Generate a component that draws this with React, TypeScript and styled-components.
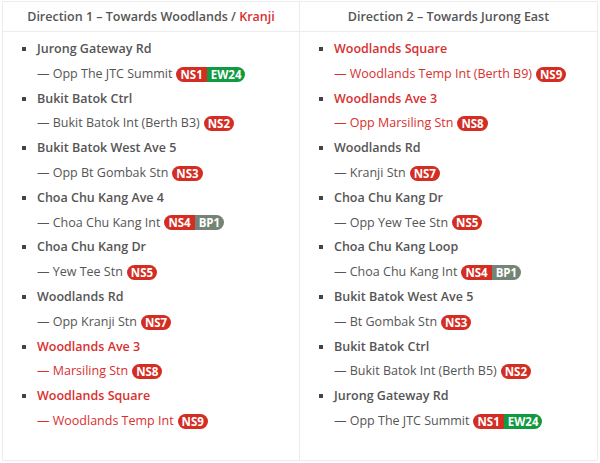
import React from 'react'
import styled, { createGlobalStyle } from 'styled-components'

const GlobalStyle = createGlobalStyle`
  body {
    margin: 0;
    background: #fff;
    font-family: 'Open Sans', 'Noto Sans', sans-serif;
    color: #555;
  }
`

const Table = styled.div`
  display: grid;
  grid-template-columns: 297px 297px;
  margin: 1px 0 0 2px;
  width: 596px;
  border: 1px solid #ececec;
  box-sizing: border-box;
`

const HeadCell = styled.div<{ $last?: boolean }>`
  height: 30px;
  display: flex;
  align-items: center;
  justify-content: center;
  padding-bottom: 1px;
  box-sizing: border-box;
  font-size: 12.5px;
  font-weight: 600;
  color: #555;
  border-bottom: 1px solid #ececec;
  border-right: ${({ $last }) => ($last ? 'none' : '1px solid #ececec')};
`

const Red = styled.span`
  color: #d8302f;
`

const BodyCell = styled.div<{ $last?: boolean }>`
  padding: 5px 0 26px 0;
  border-right: ${({ $last }) => ($last ? 'none' : '1px solid #ececec')};
`

const List = styled.ul`
  margin: 0;
  padding-left: 34px;
  list-style: square;
  font-size: 12.5px;
  line-height: 24.8px;

  li::marker {
    color: #444;
  }
`

const Stop = styled.li<{ $red?: boolean }>`
  color: ${({ $red }) => ($red ? '#d8302f' : '#555')};
`

const Road = styled.div`
  font-weight: 600;
`

const Sub = styled.div`
  display: flex;
  align-items: center;
  gap: 4px;
  white-space: nowrap;
`

const Pill = styled.span`
  display: inline-flex;
  height: 15px;
  border-radius: 8px;
  overflow: hidden;
  font-size: 11.5px;
  font-weight: 700;
  line-height: 15px;
  color: #fff;
`

const Code = styled.span<{ $line: string }>`
  padding: 0 4px;
  background: ${({ $line }) => ($line === 'EW' ? '#119a3f' : $line === 'BP' ? '#748477' : '#d42e24')};
`

type Stn = { road: string; stop: string; codes: string[]; red?: boolean }

const dir1: Stn[] = [
  { road: 'Jurong Gateway Rd', stop: 'Opp The JTC Summit', codes: ['NS1', 'EW24'] },
  { road: 'Bukit Batok Ctrl', stop: 'Bukit Batok Int (Berth B3)', codes: ['NS2'] },
  { road: 'Bukit Batok West Ave 5', stop: 'Opp Bt Gombak Stn', codes: ['NS3'] },
  { road: 'Choa Chu Kang Ave 4', stop: 'Choa Chu Kang Int', codes: ['NS4', 'BP1'] },
  { road: 'Choa Chu Kang Dr', stop: 'Yew Tee Stn', codes: ['NS5'] },
  { road: 'Woodlands Rd', stop: 'Opp Kranji Stn', codes: ['NS7'] },
  { road: 'Woodlands Ave 3', stop: 'Marsiling Stn', codes: ['NS8'], red: true },
  { road: 'Woodlands Square', stop: 'Woodlands Temp Int', codes: ['NS9'], red: true },
]

const dir2: Stn[] = [
  { road: 'Woodlands Square', stop: 'Woodlands Temp Int (Berth B9)', codes: ['NS9'], red: true },
  { road: 'Woodlands Ave 3', stop: 'Opp Marsiling Stn', codes: ['NS8'], red: true },
  { road: 'Woodlands Rd', stop: 'Kranji Stn', codes: ['NS7'] },
  { road: 'Choa Chu Kang Dr', stop: 'Opp Yew Tee Stn', codes: ['NS5'] },
  { road: 'Choa Chu Kang Loop', stop: 'Choa Chu Kang Int', codes: ['NS4', 'BP1'] },
  { road: 'Bukit Batok West Ave 5', stop: 'Bt Gombak Stn', codes: ['NS3'] },
  { road: 'Bukit Batok Ctrl', stop: 'Bukit Batok Int (Berth B5)', codes: ['NS2'] },
  { road: 'Jurong Gateway Rd', stop: 'Opp The JTC Summit', codes: ['NS1', 'EW24'] },
]

const StopList = ({ items }: { items: Stn[] }) => (
  <List>
    {items.map((s) => (
      <Stop key={s.road} $red={s.red}>
        <Road>{s.road}</Road>
        <Sub>
          <span>— {s.stop}</span>
          <Pill>
            {s.codes.map((c) => (
              <Code key={c} $line={c.slice(0, 2)}>
                {c}
              </Code>
            ))}
          </Pill>
        </Sub>
      </Stop>
    ))}
  </List>
)

export default function App() {
  return (
    <>
      <GlobalStyle />
      <Table>
        <HeadCell>
          Direction 1 – Towards Woodlands /&nbsp;<Red>Kranji</Red>
        </HeadCell>
        <HeadCell $last>Direction 2 – Towards Jurong East</HeadCell>
        <BodyCell>
          <StopList items={dir1} />
        </BodyCell>
        <BodyCell $last>
          <StopList items={dir2} />
        </BodyCell>
      </Table>
    </>
  )
}
